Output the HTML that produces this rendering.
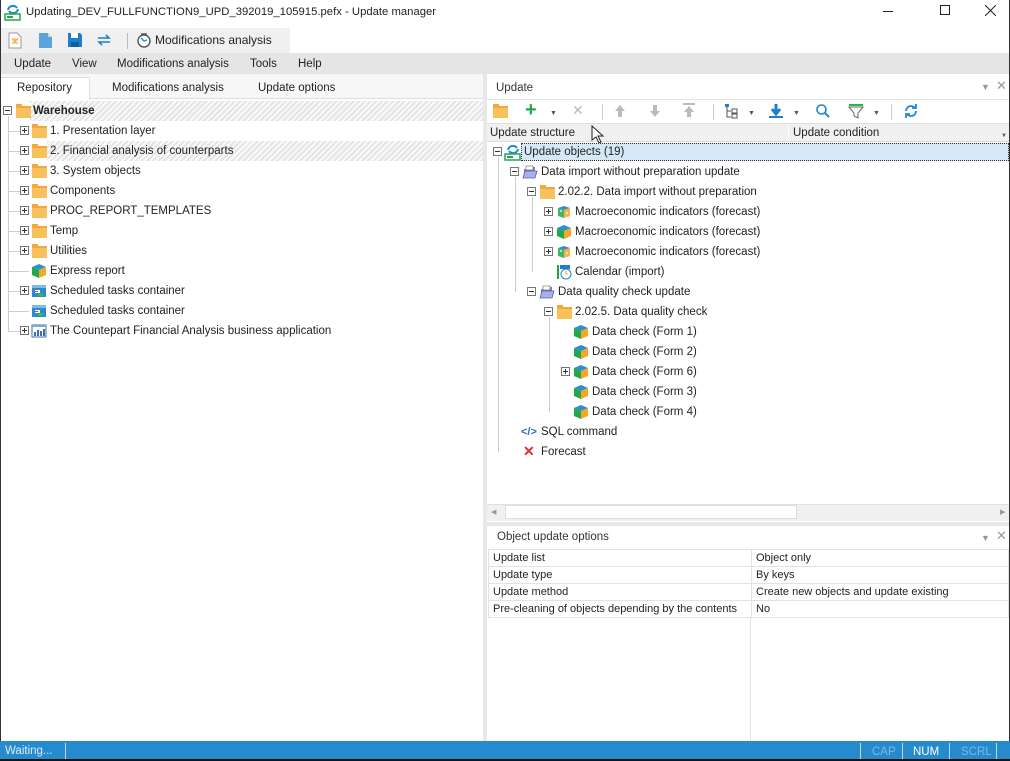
<!DOCTYPE html>
<html><head><meta charset="utf-8"><style>
*{margin:0;padding:0;box-sizing:border-box}
body{width:1010px;height:761px;position:relative;overflow:hidden;background:#fff;font-family:"Liberation Sans",sans-serif;font-size:11.5px;color:#222}
.a{position:absolute;white-space:nowrap}
.t{position:absolute;white-space:nowrap;line-height:14px}
.ex{position:absolute;width:9px;height:9px;border:1px solid #777;background:#fff}
.ex:before{content:"";position:absolute;left:1px;top:3px;width:5px;height:1px;background:#333}
.ex.p:after{content:"";position:absolute;left:3px;top:1px;width:1px;height:5px;background:#333}
.fo{position:absolute;width:15px;height:12px;background:#f9c15c;border-top:2px solid #f3a93a}
.fo:before{content:"";position:absolute;left:0;top:-4px;width:6px;height:3px;background:#f3a93a}
.hatch{background:repeating-linear-gradient(135deg,#e4e4e4 0 2px,#fafafa 2px 4px)}
.vl{position:absolute;border-left:1px solid #ccc}
.hl{position:absolute;border-top:1px solid #ccc}
.gr{table-layout:fixed}
.gr td{border:1px solid #e2e2e2;height:17px;padding:0 4px;font-size:11px;line-height:15px;overflow:hidden;white-space:nowrap}
</style></head><body>
<svg width="0" height="0" style="position:absolute"><defs>
<g id="cube"><path d="M8 1 L15 4 L8 7 L1 4Z" fill="#2a8fd6"/><path d="M1 4 L8 7 L8 15 L1 12Z" fill="#21a84a"/><path d="M15 4 L8 7 L8 15 L15 12Z" fill="#f7a628"/></g>
<g id="ico"><path d="M8 2 L14 4 L8 6 L2 4Z" fill="#2a8fd6"/><path d="M2 4 L8 6 L8 14 L2 12Z" fill="#21a84a" opacity=".85"/><path d="M14 4 L8 6 L8 14 L14 12Z" fill="#f7a628" opacity=".85"/><path d="M4 6h2v2H4zM10 8h2v2h-2z" fill="#fff" opacity=".6"/></g>
<g id="sched"><rect x="1" y="2" width="14" height="12" fill="#2b8ad0"/><rect x="1" y="2" width="14" height="3" fill="#7fbbe6"/><rect x="4" y="7" width="5" height="3" fill="#fff"/><rect x="7" y="10" width="5" height="3" fill="#3cb454"/><rect x="4" y="8" width="3" height="1" fill="#e33"/></g>
<g id="bapp"><rect x="1" y="2" width="14" height="12" fill="#fff" stroke="#3d6fb0"/><rect x="1" y="2" width="14" height="2" fill="#7fa6d6"/><rect x="3" y="9" width="2" height="4" fill="#3d6fb0"/><rect x="6" y="7" width="2" height="6" fill="#3d6fb0"/><rect x="9" y="8" width="2" height="5" fill="#3d6fb0"/><rect x="12" y="6" width="2" height="7" fill="#3d6fb0"/></g>
<g id="pkg"><path d="M2 5h4l1-2h6v10H2z" fill="#7c83c6"/><path d="M3 7h12l-2 7H1z" fill="#aab1e8" stroke="#5860a8" stroke-width=".8"/><rect x="4" y="2" width="7" height="4" fill="#fff" stroke="#666" stroke-width=".6"/></g>
</defs></svg>

<div class="a" style="left:0;top:0;width:1px;height:761px;background:#333"></div>
<div class="a" style="right:0;top:0;width:1px;height:761px;background:#333"></div>

<svg class="a" style="left:4px;top:3px" width="18" height="18"><path d="M4 7a5 5 0 0 1 9-2" stroke="#1e88d2" stroke-width="2" fill="none"/><path d="M14 6a5 5 0 0 1-9 2" stroke="#1e88d2" stroke-width="2" fill="none"/><rect x="1" y="11" width="15" height="6" fill="#fff" stroke="#22a54a" stroke-width="1.5"/><rect x="3" y="13" width="6" height="2" fill="#22a54a"/></svg>
<div class="t" style="left:26px;top:5px;font-size:11.3px">Updating_DEV_FULLFUNCTION9_UPD_392019_105915.pefx - Update manager</div>
<div class="a" style="left:883px;top:11px;width:10px;height:1px;background:#222"></div>
<div class="a" style="left:940px;top:5px;width:10px;height:10px;border:1px solid #222"></div>
<svg class="a" style="left:985px;top:5px" width="11" height="11"><path d="M0 0L11 11M11 0L0 11" stroke="#222" stroke-width="1"/></svg>

<div class="a" style="left:1px;top:28px;width:289px;height:25px;background:#f0f0f0"></div>
<svg class="a" style="left:7px;top:32px" width="16" height="17"><path d="M2 1h8l4 4v11H2z" fill="#fff" stroke="#999"/><path d="M5 8h6M8 6v6M5 6l6 6M11 6l-6 6" stroke="#f3a93a"/></svg>
<svg class="a" style="left:38px;top:32px" width="16" height="17"><path d="M1 1h9l4 4v11H1z" fill="#5ba3d9"/><path d="M10 1v4h4" fill="#bcdaf0"/></svg>
<svg class="a" style="left:67px;top:32px" width="16" height="16"><path d="M1 1h12l2 2v12H1z" fill="#1e7fc9"/><rect x="4" y="1" width="7" height="5" fill="#fff"/><rect x="4" y="10" width="8" height="5" fill="#0f5e9c"/></svg>
<svg class="a" style="left:96px;top:33px" width="16" height="14"><path d="M2 5h11l-3-3M14 9H3l3 3" stroke="#1e7fc9" stroke-width="1.6" fill="none"/></svg>
<div class="a" style="left:127px;top:33px;width:1px;height:16px;background:#bbb"></div>
<svg class="a" style="left:136px;top:32px" width="16" height="16"><circle cx="8" cy="9" r="6" fill="#fff" stroke="#555" stroke-width="1.4"/><path d="M8 9l-3-3M8 9l3-1" stroke="#1e88d2" stroke-width="1.4"/><path d="M5 2h6" stroke="#555" stroke-width="1.4"/></svg>
<div class="t" style="left:155px;top:33px;font-size:12px">Modifications analysis</div>

<div class="a" style="left:1px;top:53px;width:1008px;height:21px;background:#e5e5e5"></div>
<div class="t" style="left:14px;top:57px">Update</div>
<div class="t" style="left:72px;top:57px">View</div>
<div class="t" style="left:117px;top:57px">Modifications analysis</div>
<div class="t" style="left:250px;top:57px">Tools</div>
<div class="t" style="left:298px;top:57px">Help</div>

<div class="a" style="left:1px;top:74px;width:482px;height:25px;background:#f7f7f7;border-bottom:1px solid #ddd"></div>
<div class="a" style="left:1px;top:77px;width:89px;height:23px;background:#fff;border:1px solid #ddd;border-bottom:none;border-left:none"></div>
<div class="t" style="left:17px;top:81px">Repository</div>
<div class="t" style="left:112px;top:81px">Modifications analysis</div>
<div class="t" style="left:258px;top:81px">Update options</div>
<div class="a" style="left:483px;top:74px;width:4px;height:667px;background:#e8e8e8"></div>

<div class="a hatch" style="left:30px;top:101px;width:453px;height:20px"></div>
<div class="a hatch" style="left:47px;top:141px;width:436px;height:20px"></div>
<div class="vl" style="left:8px;top:116px;height:216px"></div>
<div class="ex" style="left:3px;top:106px"></div><div class="fo" style="left:16px;top:106px"></div>
<div class="t" style="left:33px;top:104px;font-weight:bold">Warehouse</div>
<div id="lt"></div>

<div class="t" style="left:496px;top:81px;color:#333">Update</div>
<div class="t" style="left:981px;top:80px;color:#999;font-size:9px">▼</div>
<div class="t" style="left:996px;top:79px;color:#999;font-size:13px">✕</div>
<div class="a" style="left:487px;top:99px;width:522px;height:1px;background:#e3e3e3"></div>
<div class="fo" style="left:493px;top:106px"></div>
<div class="t" style="left:525px;top:100px;color:#1fa84a;font-size:20px;font-weight:bold;line-height:20px">+</div>
<div class="t" style="left:550px;top:107px;font-size:7px;color:#555">▼</div>
<div class="t" style="left:572px;top:103px;color:#bbb;font-size:14px">✕</div>
<div class="a" style="left:602px;top:104px;width:1px;height:16px;background:#ccc"></div>
<svg class="a" style="left:613px;top:104px" width="14" height="14"><path d="M7 1l5 6H9v6H5V7H2z" fill="#bbb"/></svg>
<svg class="a" style="left:648px;top:104px" width="14" height="14"><path d="M7 13l5-6H9V1H5v6H2z" fill="#bbb"/></svg>
<svg class="a" style="left:682px;top:103px" width="14" height="15"><path d="M1 1h12" stroke="#bbb" stroke-width="2"/><path d="M7 3l5 6H9v5H5V9H2z" fill="#bbb"/></svg>
<div class="a" style="left:713px;top:104px;width:1px;height:16px;background:#ccc"></div>
<svg class="a" style="left:724px;top:103px" width="16" height="16"><rect x="1" y="1" width="4" height="3" fill="#1e7fc9"/><path d="M3 4v10h4M3 8h4" stroke="#555" fill="none"/><rect x="8" y="6" width="5" height="4" fill="none" stroke="#555"/><rect x="8" y="11" width="5" height="4" fill="none" stroke="#555"/></svg>
<div class="t" style="left:748px;top:107px;font-size:7px;color:#555">▼</div>
<svg class="a" style="left:768px;top:103px" width="16" height="16"><path d="M8 1v9M4 6l4 5 4-5" stroke="#1e7fc9" stroke-width="3" fill="none"/><rect x="1" y="13" width="14" height="2" fill="#1e7fc9"/></svg>
<div class="t" style="left:793px;top:107px;font-size:7px;color:#555">▼</div>
<svg class="a" style="left:815px;top:103px" width="16" height="16"><circle cx="6.5" cy="6.5" r="4.5" fill="none" stroke="#1e88d2" stroke-width="1.6"/><path d="M10 10l4 4" stroke="#1e88d2" stroke-width="2"/></svg>
<svg class="a" style="left:848px;top:103px" width="16" height="16"><rect x="1" y="1" width="14" height="2" fill="#2cb34a"/><path d="M1 4h14l-5 6v5l-4-2v-3z" fill="none" stroke="#666"/></svg>
<div class="t" style="left:873px;top:107px;font-size:7px;color:#555">▼</div>
<div class="a" style="left:891px;top:104px;width:1px;height:16px;background:#ccc"></div>
<svg class="a" style="left:903px;top:103px" width="16" height="16"><path d="M3 8a5 5 0 0 1 9-3M13 8a5 5 0 0 1-9 3" stroke="#1e88d2" stroke-width="1.8" fill="none"/><path d="M13 1v4H9M3 15v-4h4" stroke="#1e88d2" stroke-width="1.8" fill="none"/></svg>
<div class="a" style="left:487px;top:123px;width:522px;height:19px;background:#f0f0f0;border-top:1px solid #ddd;border-bottom:1px solid #ddd"></div>
<div class="a" style="left:788px;top:124px;width:1px;height:17px;background:#fff"></div>
<div class="t" style="left:490px;top:126px">Update structure</div>
<div class="t" style="left:793px;top:126px">Update condition</div>
<div class="t" style="left:1001px;top:129px;font-size:6px;color:#555">▼</div>
<svg class="a" style="left:591px;top:125px" width="14" height="20"><path d="M1 1v14l4-3 3 6 2-1-3-6h5z" fill="#fff" stroke="#222"/></svg>
<div class="a" style="left:521px;top:143px;width:488px;height:18px;background:#d6e8f5;border:1px dotted #333"></div>
<div id="rt"></div>

<div class="a" style="left:487px;top:504px;width:522px;height:17px;background:#f0f0f0;border-top:1px solid #e0e0e0"></div>
<div class="a" style="left:505px;top:505px;width:292px;height:14px;background:#fff;border:1px solid #ddd"></div>
<div class="t" style="left:491px;top:506px;font-size:7px;color:#999">◀</div>
<div class="t" style="left:1000px;top:506px;font-size:7px;color:#999">▶</div>
<div class="a" style="left:487px;top:522px;width:522px;height:4px;background:#e8e8e8"></div>

<div class="t" style="left:497px;top:530px;color:#333">Object update options</div>
<div class="t" style="left:981px;top:531px;color:#999;font-size:9px">▼</div>
<div class="t" style="left:996px;top:529px;color:#999;font-size:13px">✕</div>
<table class="a gr" style="left:488px;top:549px;width:521px;border-collapse:collapse">
<colgroup><col style="width:263px"><col></colgroup>
<tr><td>Update list</td><td>Object only</td></tr>
<tr><td>Update type</td><td>By keys</td></tr>
<tr><td>Update method</td><td>Create new objects and update existing</td></tr>
<tr><td>Pre-cleaning of objects depending by the contents</td><td>No</td></tr>
</table>
<div class="a" style="left:750px;top:617px;width:1px;height:124px;background:#e2e2e2"></div>

<div class="a" style="left:0;top:741px;width:1010px;height:18px;background:#268bcc"></div>
<div class="a" style="left:0;top:759px;width:1010px;height:2px;background:#111"></div>
<div class="t" style="left:5px;top:744px;color:#dbeaf6">Waiting...</div>
<div class="a" style="left:65px;top:743px;width:1px;height:16px;background:#bcd9ef"></div>
<div class="a" style="left:860px;top:743px;width:1px;height:16px;background:#bcd9ef"></div>
<div class="a" style="left:902px;top:743px;width:1px;height:16px;background:#bcd9ef"></div>
<div class="a" style="left:949px;top:743px;width:1px;height:16px;background:#bcd9ef"></div>
<div class="a" style="left:996px;top:743px;width:1px;height:16px;background:#bcd9ef"></div>
<div class="t" style="left:872px;top:745px;color:#7fb8e0">CAP</div>
<div class="t" style="left:913px;top:745px;color:#fff">NUM</div>
<div class="t" style="left:961px;top:745px;color:#7fb8e0">SCRL</div>

<script>
function row(c,ex,exx,ico,icx,tx,txt,y,extra){
 let h='';
 if(ex) h+=`<div class="ex ${ex}" style="left:${exx}px;top:${y-5}px"></div>`;
 if(ico=='fo') h+=`<div class="fo" style="left:${icx}px;top:${y-5}px"></div>`;
 else if(ico) h+=`<svg class="a" style="left:${icx}px;top:${y-8}px" width="16" height="16"><use href="#${ico}"/></svg>`;
 h+=`<div class="t" style="left:${tx}px;top:${y-7}px;${extra||''}">${txt}</div>`;
 c.innerHTML+=h;
}
const L=document.getElementById('lt');
const li=[['p','fo','1. Presentation layer'],['p','fo','2. Financial analysis of counterparts'],['p','fo','3. System objects'],['p','fo','Components'],['p','fo','PROC_REPORT_TEMPLATES'],['p','fo','Temp'],['p','fo','Utilities'],['','cube','Express report'],['p','sched','Scheduled tasks container'],['','sched','Scheduled tasks container'],['p','bapp','The Countepart Financial Analysis business application']];
li.forEach((r,i)=>{let y=131+i*20;L.innerHTML+=`<div class="hl" style="left:9px;top:${y}px;width:20px"></div>`;row(L,r[0],20,r[1],r[1]=='fo'?32:31,50,r[2],y);});
const R=document.getElementById('rt');
R.innerHTML+=`<div class="vl" style="left:498px;top:157px;height:295px"></div><div class="vl" style="left:515px;top:177px;height:115px"></div><div class="vl" style="left:532px;top:197px;height:75px"></div><div class="vl" style="left:549px;top:317px;height:95px"></div>`;
R.innerHTML+=`<svg class="a" style="left:504px;top:143px" width="18" height="18"><path d="M4 7a5 5 0 0 1 9-2" stroke="#1e88d2" stroke-width="2" fill="none"/><path d="M14 6a5 5 0 0 1-9 2" stroke="#1e88d2" stroke-width="2" fill="none"/><rect x="1" y="11" width="15" height="6" fill="#fff" stroke="#22a54a" stroke-width="1.5"/><rect x="3" y="13" width="6" height="2" fill="#22a54a"/></svg>`;
row(R,'m',493,null,0,524,'Update objects (19)',152);
const ri=[[172,'m',510,'pkg',522,541,'Data import without preparation update'],[192,'m',527,'fo',540,558,'2.02.2. Data import without preparation'],[212,'p',544,'ico',556,575,'Macroeconomic indicators (forecast)'],[232,'p',544,'cube',556,575,'Macroeconomic indicators (forecast)'],[252,'p',544,'ico',556,575,'Macroeconomic indicators (forecast)'],[292,'m',527,'pkg',539,558,'Data quality check update'],[312,'m',544,'fo',557,575,'2.02.5. Data quality check'],[332,'',0,'cube',573,592,'Data check (Form 1)'],[352,'',0,'cube',573,592,'Data check (Form 2)'],[372,'p',561,'cube',573,592,'Data check (Form 6)'],[392,'',0,'cube',573,592,'Data check (Form 3)'],[412,'',0,'cube',573,592,'Data check (Form 4)']];
ri.forEach(r=>row(R,r[1],r[2],r[3],r[4],r[5],r[6],r[0]));
R.innerHTML+=`<svg class="a" style="left:556px;top:264px" width="16" height="16"><rect x="1" y="1" width="2" height="14" fill="#22a54a"/><rect x="4" y="1" width="10" height="4" fill="#1e7fc9"/><circle cx="10" cy="10" r="5" fill="#fff" stroke="#1e7fc9"/><path d="M10 7v3h2" stroke="#f3a93a" fill="none"/></svg>`;
row(R,'',0,null,0,575,'Calendar (import)',272);
R.innerHTML+=`<div class="t" style="left:521px;top:425px;color:#2a6cc0;font-weight:bold;font-size:11px">&lt;/&gt;</div>`;
row(R,'',0,null,0,541,'SQL command',432);
R.innerHTML+=`<div class="t" style="left:523px;top:444px;color:#e03030;font-size:14px;font-weight:bold">✕</div>`;
row(R,'',0,null,0,541,'Forecast',452);
</script>
</body></html>
